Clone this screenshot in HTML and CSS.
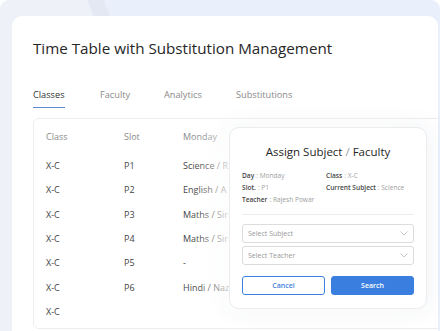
FILE: index.html
```html
<!DOCTYPE html>
<html lang="en">
<head>
    <meta charset="UTF-8">
    <meta name="viewport" content="width=device-width, initial-scale=1.0">
    <title>Time Table</title>
    <link rel="stylesheet" href="styles.css">
</head>
<body>
    <div class="page">
        <div class="card">
            <h1 class="title">Time Table with Substitution Management</h1>
            <div class="tabs">
                <div class="tab active"><span>Classes</span></div>
                <div class="tab"><span>Faculty</span></div>
                <div class="tab"><span>Analytics</span></div>
                <div class="tab"><span>Substitutions</span></div>
            </div>
            <div class="table-box">
                <div class="row head">
                    <div class="cell c-class">Class</div>
                    <div class="cell c-slot">Slot</div>
                    <div class="cell c-day">Monday</div>
                </div>
                <div class="row">
                    <div class="cell c-class">X-C</div>
                    <div class="cell c-slot">P1</div>
                    <div class="cell c-day">Science / R</div>
                </div>
                <div class="row">
                    <div class="cell c-class">X-C</div>
                    <div class="cell c-slot">P2</div>
                    <div class="cell c-day">English / A</div>
                </div>
                <div class="row">
                    <div class="cell c-class">X-C</div>
                    <div class="cell c-slot">P3</div>
                    <div class="cell c-day">Maths / Sir</div>
                </div>
                <div class="row">
                    <div class="cell c-class">X-C</div>
                    <div class="cell c-slot">P4</div>
                    <div class="cell c-day">Maths / Sir</div>
                </div>
                <div class="row">
                    <div class="cell c-class">X-C</div>
                    <div class="cell c-slot">P5</div>
                    <div class="cell c-day">-</div>
                </div>
                <div class="row">
                    <div class="cell c-class">X-C</div>
                    <div class="cell c-slot">P6</div>
                    <div class="cell c-day">Hindi / Naz</div>
                </div>
                <div class="row">
                    <div class="cell c-class">X-C</div>
                    <div class="cell c-slot"></div>
                    <div class="cell c-day"></div>
                </div>
            </div>
        </div>

        <div class="modal">
            <div class="modal-title">Assign Subject <span class="slash">/</span> Faculty</div>
            <div class="info">
                <div class="pair"><span class="k">Day</span><span class="v">: Monday</span></div>
                <div class="pair"><span class="k">Class</span><span class="v">: X-C</span></div>
                <div class="pair"><span class="k">Slot.</span><span class="v">: P1</span></div>
                <div class="pair"><span class="k">Current Subject</span><span class="v">: Science</span></div>
                <div class="pair"><span class="k">Teacher</span><span class="v">: Rajesh Powar</span></div>
            </div>
            <div class="divider"></div>
            <div class="select">
                <span>Select Subject</span>
                <svg width="8" height="5" viewBox="0 0 8 5"><path d="M0.5 0.5 L4 4 L7.5 0.5" fill="none" stroke="#b5b9c0" stroke-width="0.8"/></svg>
            </div>
            <div class="select">
                <span>Select Teacher</span>
                <svg width="8" height="5" viewBox="0 0 8 5"><path d="M0.5 0.5 L4 4 L7.5 0.5" fill="none" stroke="#b5b9c0" stroke-width="0.8"/></svg>
            </div>
            <div class="buttons">
                <button class="btn cancel">Cancel</button>
                <button class="btn search">Search</button>
            </div>
        </div>
    </div>
</body>
</html>
```

FILE: styles.css
```css
body {
    margin: 0;
    width: 440px;
    height: 331px;
    overflow: hidden;
    font-family: "Open Sans", "DejaVu Sans", sans-serif;
    background-color: white;
}
.page {
    position: relative;
    height: 331px;
    overflow: hidden;
    padding: 16px 0 0 12px;
    box-sizing: border-box;
    border-radius: 9px 9px 0 0;
    background-color: #e9effb;
    background-image: radial-gradient(circle at -250px 150px, #eef1f8 0, #eef1f8 368px, #e3e8f2 370px, #e3e8f2 383px, rgba(233,239,251,0) 385px);
}
.card {
    background-color: white;
    width: 426px;
    height: 330px;
    border-radius: 10px 10px 0 0;
    padding: 22px 0 0 21px;
    box-sizing: border-box;
}
.title {
    margin: 0;
    font-size: 15.2px;
    font-weight: 500;
    line-height: 20px;
    color: #262626;
}
.tabs {
    display: grid;
    grid-template-columns: 67px 64px 72px auto;
    margin-top: 23px;
    height: 37px;
}
.tab span {
    display: inline-block;
    font-size: 9.2px;
    color: #8a8a8a;
    line-height: 22px;
    padding-bottom: 1px;
}
.tab.active span {
    color: #333;
    border-bottom: 1.5px solid #5b8ad4;
}
.table-box {
    border: 1px solid #ededed;
    border-radius: 6px;
    width: 410px;
    height: 211px;
    padding: 8px 0 0 12px;
    box-sizing: border-box;
}
.row {
    display: flex;
    height: 24.4px;
    line-height: 24.4px;
    font-size: 9px;
    color: #444;
}
.row.head {
    color: #8c8c8c;
    height: 26.8px;
    line-height: 20px;
}
.cell {
    white-space: nowrap;
}
.c-class {
    width: 78px;
}
.c-slot {
    width: 59px;
}
.c-day {
    width: 46px;
}
.modal {
    position: absolute;
    left: 229px;
    top: 127px;
    width: 198px;
    height: 182px;
    box-sizing: border-box;
    background-color: white;
    border: 1px solid #ececec;
    border-radius: 10px;
    box-shadow: -14px 0 28px rgba(255,255,255,0.9), 0 0 24px rgba(40,60,100,0.08);
    padding: 14px 12px 0 12px;
}
.modal-title {
    text-align: center;
    font-size: 11.5px;
    font-weight: 500;
    color: #262626;
    line-height: 20px;
}
.slash {
    color: #999;
}
.info {
    display: grid;
    grid-template-columns: 84px 1fr;
    row-gap: 3px;
    margin-top: 9px;
    font-size: 6.6px;
    line-height: 9px;
}
.pair {
    display: flex;
    gap: 2px;
}
.k {
    color: #444;
    font-weight: 600;
}
.v {
    color: #a0a0a0;
}
.divider {
    border-top: 1px solid #ececec;
    margin-top: 10px;
}
.select {
    display: flex;
    justify-content: space-between;
    align-items: center;
    height: 19px;
    box-sizing: border-box;
    border: 1px solid #dcdcdc;
    border-radius: 3px;
    padding: 0 5px;
    font-size: 7px;
    color: #999;
    margin-top: 3px;
}
.divider + .select {
    margin-top: 9px;
}
.buttons {
    display: flex;
    gap: 6px;
    margin-top: 11px;
}
.btn {
    flex: 1;
    height: 19px;
    border-radius: 3px;
    font-family: inherit;
    font-size: 7px;
    font-weight: 600;
}
.cancel {
    background-color: white;
    border: 1px solid #3d7fdc;
    color: #3d7fdc;
}
.search {
    background-color: #3a7fe0;
    border: 1px solid #3a7fe0;
    color: white;
}
```
